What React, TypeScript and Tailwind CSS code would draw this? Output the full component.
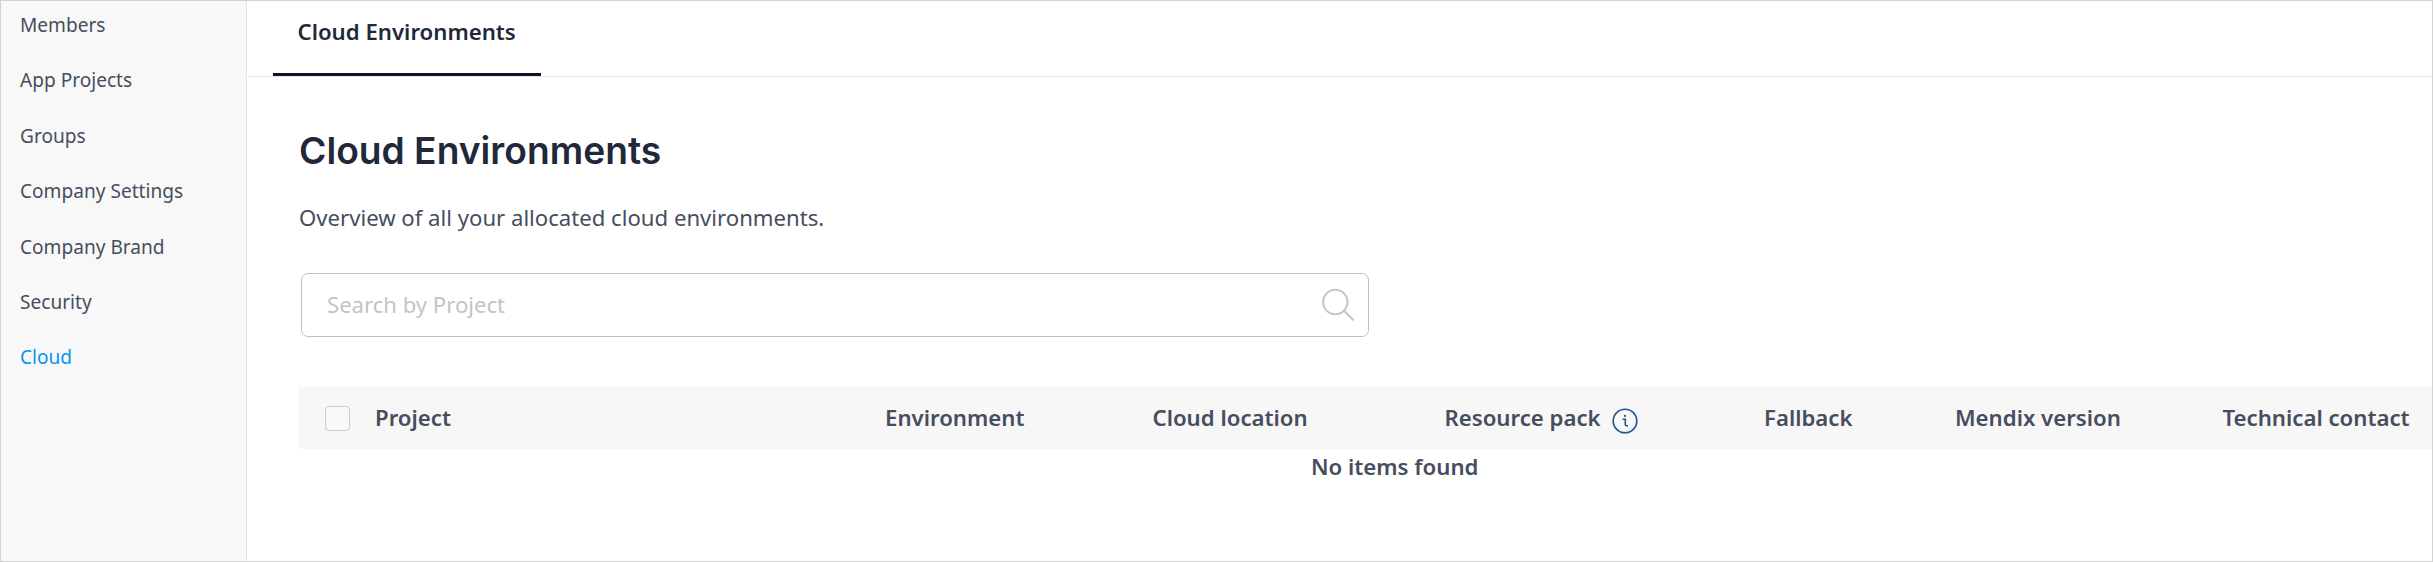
import React from "react";

const navItems = [
  "Members",
  "App Projects",
  "Groups",
  "Company Settings",
  "Company Brand",
  "Security",
  "Cloud",
];

function Sidebar({ active }: { active: string }) {
  return (
    <nav className="flex w-[246px] shrink-0 flex-col gap-[28.4px] border-r border-[#e3e4e6] bg-[#f8f8f8] pt-[11px] pl-[19px] text-[19.1px] leading-[27px]">
      {navItems.map((item) => (
        <a key={item} className={item === active ? "text-[#0595f0]" : "text-[#464e5e]"}>
          {item}
        </a>
      ))}
    </nav>
  );
}

function SearchIcon() {
  return (
    <svg width="34" height="34" viewBox="0 0 34 34" fill="none" stroke="#c1c4ca" strokeWidth="2">
      <circle cx="14.3" cy="14" r="12.2" />
      <path d="M23 22.7 L32.6 32.3" />
    </svg>
  );
}

function InfoIcon() {
  return (
    <svg width="26" height="26" viewBox="0 0 26 26" fill="none" stroke="#1f568f" strokeWidth="1.6">
      <circle cx="13" cy="13" r="11.8" />
      <path d="M10.6 11.2 H13.3 V16.4 Q13.3 17.7 14.6 17.7 H16" />
      <circle cx="13" cy="7.9" r="1.1" fill="#1f568f" stroke="none" />
    </svg>
  );
}

function EnvironmentTable() {
  return (
    <section className="mt-[50px] font-semibold text-[#464e5e]">
      <div className="grid h-[62px] grid-cols-[76px_510px_267.5px_292px_319.5px_191px_267.5px_1fr] items-center bg-[#f7f7f7] whitespace-nowrap">
        <div className="pl-[26px]">
          <div className="h-[25px] w-[25px] rounded-[4px] border border-[#c9cbcf] bg-[#f9f9f9]" />
        </div>
        <div>Project</div>
        <div>Environment</div>
        <div>Cloud location</div>
        <div className="flex items-center gap-[11.5px]">
          Resource pack
          <span className="mt-[6px]">
            <InfoIcon />
          </span>
        </div>
        <div>Fallback</div>
        <div>Mendix version</div>
        <div>Technical contact</div>
      </div>
      <p className="pt-[3px] pl-[1012px] leading-[30px]">No items found</p>
    </section>
  );
}

export default function App() {
  return (
    <div className="flex h-[562px] w-[2433px] overflow-hidden border border-[#d2d2d2] bg-white font-['Noto_Sans',sans-serif] text-[22.2px]">
      <Sidebar active="Cloud" />
      <main className="flex min-w-0 flex-1 flex-col">
        <header className="flex h-[76px] border-b border-[#e5e6e8] pl-[26px]">
          <div className="h-[75px] w-[268px] border-b-3 border-[#0a1327] pt-[16px] pl-[24.5px] leading-[30px] font-semibold whitespace-nowrap text-[#1f293a]">
            Cloud Environments
          </div>
        </header>
        <div className="flex flex-col pt-[52px] pl-[52px]">
          <h1 className="font-['Inter',sans-serif] text-[37.2px] leading-[44px] font-semibold text-[#1f293a]">
            Cloud Environments
          </h1>
          <p className="mt-[29px] text-[22.15px] leading-[30px] text-[#464e5e]">
            Overview of all your allocated cloud environments.
          </p>
          <div className="mt-[41px] ml-[2px] flex h-[64px] w-[1068px] items-center justify-between rounded-[7px] border border-[#c0c1c4] pr-[13px] pl-[25px] text-[#c1c4ca]">
            <span className="text-[22.1px]">Search by Project</span>
            <SearchIcon />
          </div>
          <EnvironmentTable />
        </div>
      </main>
    </div>
  );
}
